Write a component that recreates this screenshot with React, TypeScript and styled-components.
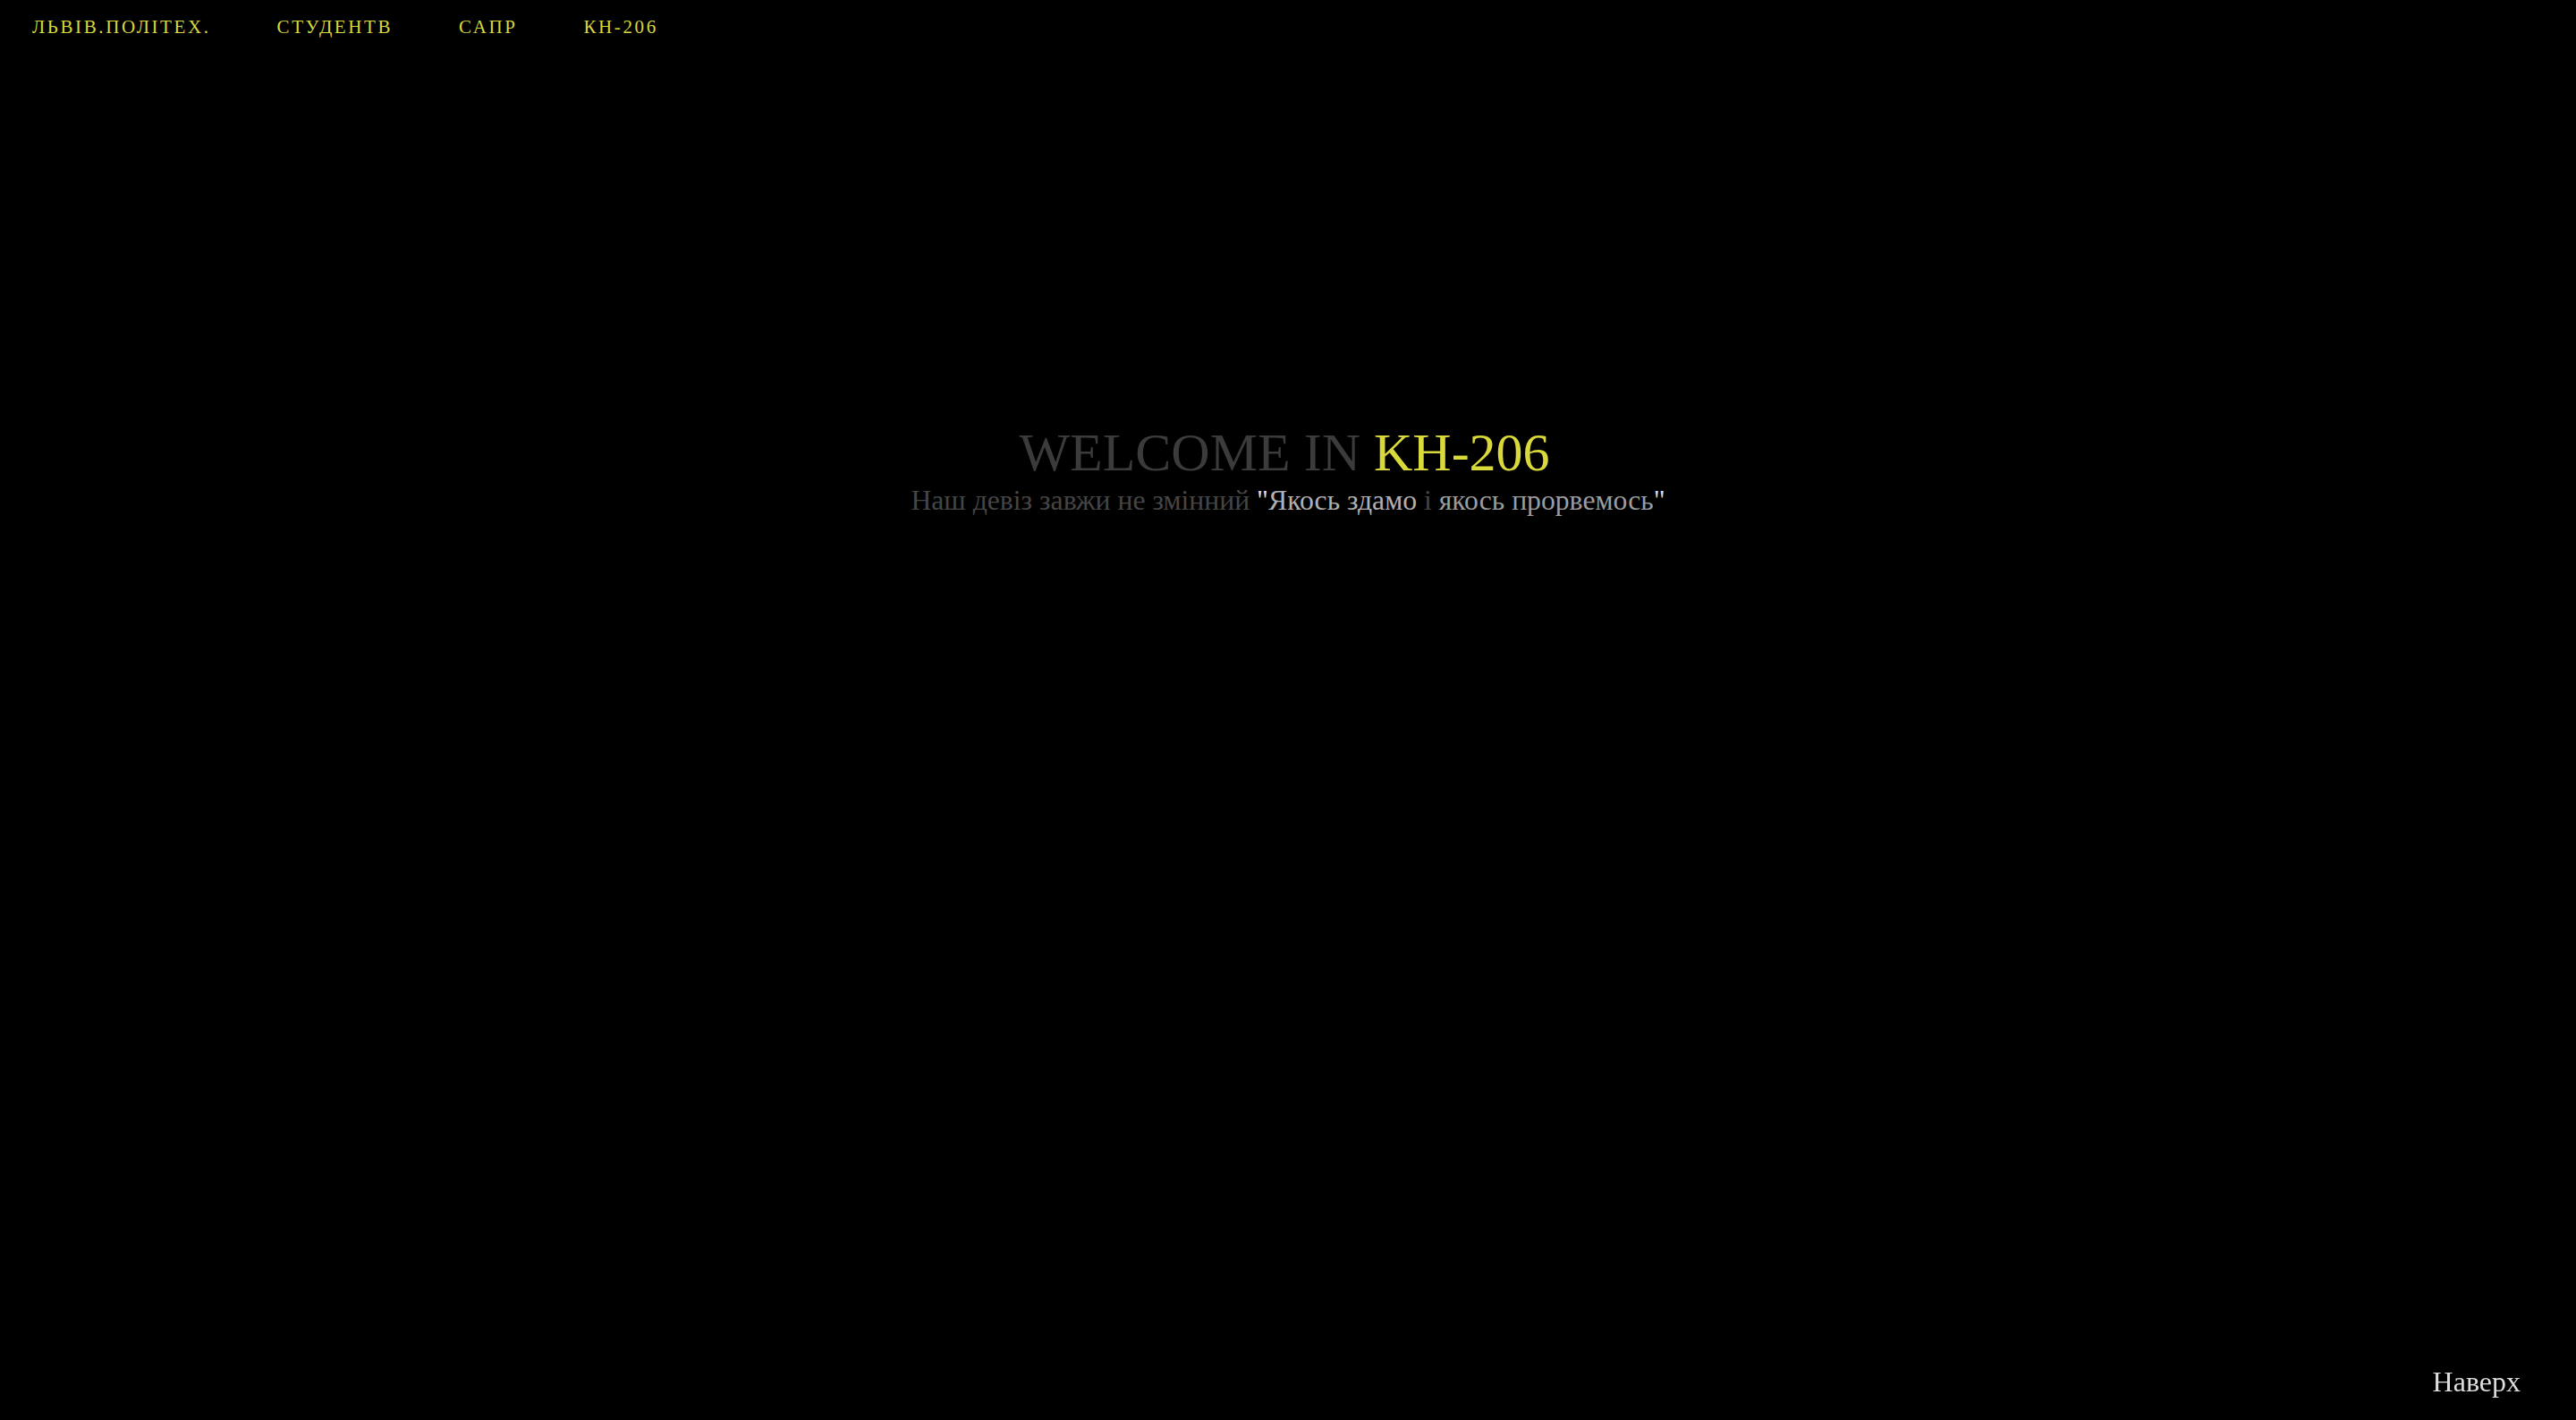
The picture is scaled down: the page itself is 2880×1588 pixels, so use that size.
import React from "react";
import styled, { createGlobalStyle } from "styled-components";

const GlobalStyle = createGlobalStyle`
  html, body {
    margin: 0;
    padding: 0;
    background: #000;
  }
  body {
    font-family: "Liberation Serif", "Times New Roman", serif;
    min-height: 100vh;
  }
`;

const Page = styled.div`
  min-height: 100vh;
  background: #000;
  display: flex;
  flex-direction: column;
`;

const Nav = styled.nav`
  display: flex;
  align-items: center;
  gap: 74px;
  padding: 18px 0 0 36px;
`;

const NavLink = styled.a`
  font-family: "Liberation Serif", "Times New Roman", serif;
  font-size: 21px;
  letter-spacing: 2.6px;
  color: #d8d83a;
  text-decoration: none;
  line-height: normal;
`;

const Hero = styled.main`
  display: flex;
  flex-direction: column;
  align-items: center;
  padding-top: 429px;
`;

const Title = styled.h1`
  margin: 0;
  padding-right: 8px;
  font-family: "Liberation Serif", "Times New Roman", serif;
  font-weight: 400;
  font-size: 60px;
  line-height: normal;
  color: #3b3b3b;
`;

const Accent = styled.span`
  color: #d9d93c;
`;

const Motto = styled.p`
  margin: 1px 0 0;
  font-family: "Liberation Serif", "Times New Roman", serif;
  font-size: 31.7px;
  line-height: normal;
  color: #454545;
`;

const Tone = styled.span<{ $c: string }>`
  color: ${(p) => p.$c};
`;

const TopLink = styled.a`
  position: fixed;
  right: 62px;
  bottom: 24px;
  font-family: "Liberation Serif", "Times New Roman", serif;
  font-size: 32px;
  line-height: normal;
  color: #dddddd;
  text-decoration: none;
`;

export default function App() {
  return (
    <>
      <GlobalStyle />
      <Page>
        <Nav>
          <NavLink href="#">ЛЬВІВ.ПОЛІТЕХ.</NavLink>
          <NavLink href="#">СТУДЕНТВ</NavLink>
          <NavLink href="#">САПР</NavLink>
          <NavLink href="#">КН-206</NavLink>
        </Nav>
        <Hero>
          <Title>
            WELCOME IN <Accent>KH-206</Accent>
          </Title>
          <Motto>
            Наш девіз завжи не змінний{" "}
            <Tone $c="#dddddd">"</Tone>
            <Tone $c="#b0b0b0">Якось здамо</Tone>{" "}
            <Tone $c="#444444">і</Tone>{" "}
            <Tone $c="#9c9c9c">якось прорвемось</Tone>
            <Tone $c="#dddddd">"</Tone>
          </Motto>
        </Hero>
        <TopLink href="#">Наверх</TopLink>
      </Page>
    </>
  );
}
